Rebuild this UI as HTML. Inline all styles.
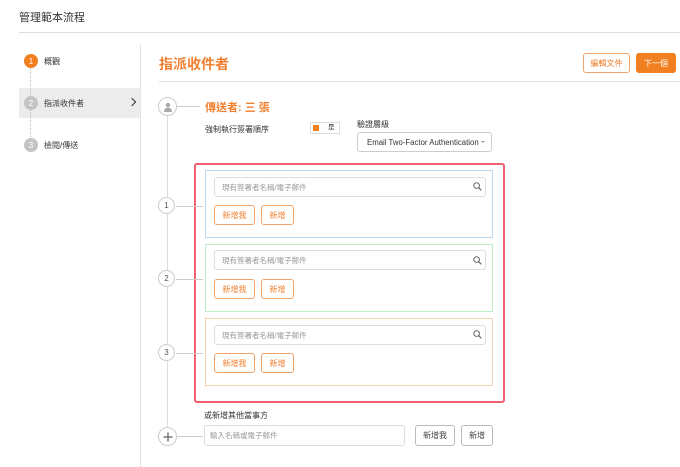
<!DOCTYPE html>
<html><head><meta charset="utf-8"><style>
*{box-sizing:border-box;margin:0;padding:0}
body{width:680px;height:467px;background:#fff;font-family:"Liberation Sans","Noto Sans CJK TC",sans-serif;color:#333;position:relative;overflow:hidden}
.a{position:absolute}
.t8{font-size:8px}
.circ{position:absolute;border-radius:50%;display:flex;align-items:center;justify-content:center;font-size:8px}
.obtn{position:absolute;border:1px solid #f0a36a;border-radius:3px;color:#f08030;font-size:8px;display:flex;align-items:center;justify-content:center;background:#fff}
.gbtn{position:absolute;border:1px solid #bbb;border-radius:3px;color:#444;font-size:8px;display:flex;align-items:center;justify-content:center;background:#fff}
.inp{position:absolute;border:1px solid #ddd;border-radius:3px;font-size:7.5px;color:#999;padding-left:7px;display:flex;align-items:center}
.num{position:absolute;width:17px;height:17px;border:1px solid #ccc;border-radius:50%;background:#fff;font-size:8px;display:flex;align-items:center;justify-content:center;color:#555}
</style></head><body>
<div class="a" style="left:19px;top:9px;font-size:11px;color:#333">管理範本流程</div>
<div class="a" style="left:19px;top:32px;width:661px;height:1px;background:#ddd"></div>
<div class="a" style="left:140px;top:44px;width:1px;height:423px;background:#e2e2e2"></div>
<div class="a" style="left:19px;top:88px;width:121px;height:30px;background:#ececec"></div>
<div class="a" style="left:30px;top:68px;height:75px;border-left:1px dotted #bbb"></div>
<div class="circ" style="left:24px;top:54px;width:14px;height:14px;background:#f08020;color:#fff">1</div>
<div class="a t8" style="left:44px;top:56px">概觀</div>
<div class="circ" style="left:24px;top:96px;width:14px;height:14px;background:#c4c4c4;color:#fff">2</div>
<div class="a t8" style="left:44px;top:98px">指派收件者</div>
<div class="a" style="left:129px;top:99px;width:6px;height:6px;border-right:1.5px solid #333;border-top:1.5px solid #333;transform:rotate(45deg)"></div>
<div class="circ" style="left:24px;top:138px;width:14px;height:14px;background:#c4c4c4;color:#fff">3</div>
<div class="a t8" style="left:44px;top:140px">檢閱/傳送</div>

<div class="a" style="left:159px;top:54px;font-size:14px;color:#f08030;font-weight:bold">指派收件者</div>
<div class="a" style="left:159px;top:81px;width:521px;height:1px;background:#e2e2e2"></div>
<div class="obtn" style="left:583px;top:53px;width:47px;height:20px">編輯文件</div>
<div class="a" style="left:636px;top:53px;width:40px;height:20px;background:#f08020;border-radius:3px;color:#fff;font-size:8px;display:flex;align-items:center;justify-content:center">下一個</div>

<div class="a" style="left:167px;top:112px;width:1px;height:323px;background:#ddd"></div>
<div class="a" style="left:176px;top:106px;width:24px;height:1px;background:#ccc"></div>
<div class="num" style="left:158px;top:97px;width:19px;height:19px">
<svg width="10" height="10" viewBox="0 0 10 10"><circle cx="5" cy="3" r="2.2" fill="#aaa"/><path d="M1 10 Q1 5.5 5 5.5 Q9 5.5 9 10Z" fill="#aaa"/></svg></div>
<div class="a" style="left:205px;top:99px;font-size:11px;color:#f08030;font-weight:bold">傳送者: 三 張</div>
<div class="a t8" style="left:205px;top:124px">強制執行簽署順序</div>
<div class="a" style="left:310px;top:122px;width:30px;height:12px;border:1px solid #ddd;background:#fff"></div>
<div class="a" style="left:313px;top:125px;width:6px;height:6px;background:#f08020"></div>
<div class="a" style="left:328px;top:123px;font-size:6.5px;line-height:10px">是</div>
<div class="a t8" style="left:357px;top:119px">驗證層級</div>
<div class="a" style="left:357px;top:132px;width:135px;height:20px;border:1px solid #ccc;border-radius:3px;font-size:7.8px;padding-left:9px;display:flex;align-items:center">Email Two-Factor Authentication</div>
<div class="a" style="left:481px;top:141px;border-left:2.5px solid transparent;border-right:2.5px solid transparent;border-top:2.5px solid #999"></div>

<div class="a" style="left:194px;top:163px;width:311px;height:240px;border:2px solid #f0606e;border-radius:3px"></div>
<div class="a" style="left:205px;top:170px;width:288px;height:68px;border:1px solid #b8d8f4"></div>
<div class="a" style="left:205px;top:244px;width:288px;height:68px;border:1px solid #bfeecc"></div>
<div class="a" style="left:205px;top:318px;width:288px;height:68px;border:1px solid #f4d0b0"></div>

<div class="a" style="left:176px;top:206px;width:27px;height:1px;background:#ccc"></div>
<div class="a" style="left:176px;top:279px;width:27px;height:1px;background:#ccc"></div>
<div class="a" style="left:176px;top:353px;width:27px;height:1px;background:#ccc"></div>
<div class="num" style="left:158px;top:197px">1</div>
<div class="num" style="left:158px;top:270px">2</div>
<div class="num" style="left:158px;top:344px">3</div>

<div class="inp" style="left:214px;top:177px;width:272px;height:20px">現有簽署者名稱/電子郵件</div>
<div class="inp" style="left:214px;top:250px;width:272px;height:20px">現有簽署者名稱/電子郵件</div>
<div class="inp" style="left:214px;top:325px;width:272px;height:20px">現有簽署者名稱/電子郵件</div>
<svg class="a" style="left:473px;top:182px" width="9" height="9" viewBox="0 0 9 9"><circle cx="3.6" cy="3.6" r="2.8" fill="none" stroke="#666" stroke-width="1"/><path d="M5.6 5.6L8.3 8.3" stroke="#666" stroke-width="1.2"/></svg>
<svg class="a" style="left:473px;top:256px" width="9" height="9" viewBox="0 0 9 9"><circle cx="3.6" cy="3.6" r="2.8" fill="none" stroke="#666" stroke-width="1"/><path d="M5.6 5.6L8.3 8.3" stroke="#666" stroke-width="1.2"/></svg>
<svg class="a" style="left:473px;top:330px" width="9" height="9" viewBox="0 0 9 9"><circle cx="3.6" cy="3.6" r="2.8" fill="none" stroke="#666" stroke-width="1"/><path d="M5.6 5.6L8.3 8.3" stroke="#666" stroke-width="1.2"/></svg>

<div class="obtn" style="left:214px;top:205px;width:41px;height:20px">新增我</div>
<div class="obtn" style="left:261px;top:205px;width:33px;height:20px">新增</div>
<div class="obtn" style="left:214px;top:279px;width:41px;height:20px">新增我</div>
<div class="obtn" style="left:261px;top:279px;width:33px;height:20px">新增</div>
<div class="obtn" style="left:214px;top:353px;width:41px;height:20px">新增我</div>
<div class="obtn" style="left:261px;top:353px;width:33px;height:20px">新增</div>

<div class="a t8" style="left:204px;top:410px">或新增其他當事方</div>
<div class="inp" style="left:204px;top:425px;width:201px;height:21px;padding-left:5px">輸入名稱或電子郵件</div>
<div class="gbtn" style="left:415px;top:425px;width:40px;height:21px">新增我</div>
<div class="gbtn" style="left:461px;top:425px;width:32px;height:21px">新增</div>
<div class="a" style="left:176px;top:436px;width:27px;height:1px;background:#ccc"></div>
<div class="num" style="left:158px;top:427px;width:19px;height:19px;font-size:14px;color:#777"><svg width="10" height="10" viewBox="0 0 10 10"><path d="M5 0.5V9.5M0.5 5H9.5" stroke="#777" stroke-width="1.5"/></svg></div>
</body></html>
